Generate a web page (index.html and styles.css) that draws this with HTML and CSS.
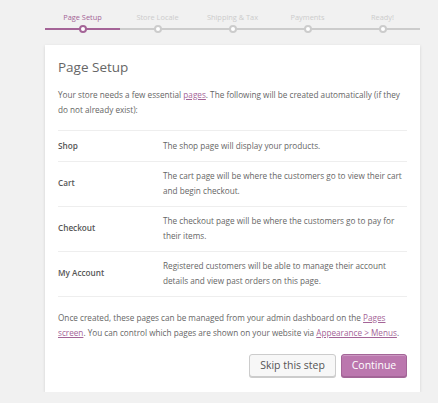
FILE: index.html
```html
<!DOCTYPE html>
<html>
<head>
<meta charset="utf-8">
<link rel="stylesheet" href="styles.css">
</head>
<body>
<div class="wrap">
  <ol class="steps">
    <li class="step active">Page Setup</li>
    <li class="step">Store Locale</li>
    <li class="step">Shipping &amp; Tax</li>
    <li class="step">Payments</li>
    <li class="step">Ready!</li>
  </ol>
  <div class="card">
    <h1 class="title">Page Setup</h1>
    <p class="intro">Your store needs a few essential <a href="#">pages</a>. The following will be created automatically (if they do not already exist):</p>
    <table class="pages">
      <tr><th>Shop</th><td>The shop page will display your products.</td></tr>
      <tr><th>Cart</th><td>The cart page will be where the customers go to view their cart and begin checkout.</td></tr>
      <tr><th>Checkout</th><td>The checkout page will be where the customers go to pay for their items.</td></tr>
      <tr><th>My Account</th><td>Registered customers will be able to manage their account details and view past orders on this page.</td></tr>
    </table>
    <p class="outro">Once created, these pages can be managed from your admin dashboard on the <a href="#">Pages screen</a>. You can control which pages are shown on your website via <a href="#">Appearance &gt; Menus</a>.</p>
    <div class="actions">
      <button class="btn btn-skip">Skip this step</button>
      <button class="btn btn-primary">Continue</button>
    </div>
  </div>
</div>
</body>
</html>
```
FILE: styles.css
```css
html, body {
  margin: 0;
  padding: 0;
  background: #f1f1f1;
}
body {
  font-family: "Open Sans", "DejaVu Sans", sans-serif;
  color: #666;
}
.wrap {
  margin-left: 45px;
  width: 375px;
  padding-top: 11px;
}
.steps {
  list-style: none;
  margin: 0;
  padding: 0;
  display: flex;
}
.step {
  position: relative;
  width: 75px;
  text-align: center;
  font-size: 7.4px;
  line-height: 12px;
  color: #ccc;
  padding-bottom: 5px;
  border-bottom: 2px solid #ccc;
}
.step::after {
  content: "";
  position: absolute;
  left: 50%;
  bottom: -5px;
  width: 8px;
  height: 8px;
  margin-left: -4px;
  box-sizing: border-box;
  border: 2px solid #ccc;
  border-radius: 50%;
  background: #fff;
}
.step.active {
  color: #a46497;
  border-bottom-color: #a46497;
}
.step.active::after {
  border-color: #a46497;
}
.card {
  margin-top: 15px;
  background: #fff;
  box-shadow: 0 1px 3px rgba(0, 0, 0, 0.13);
  padding: 12px 13px 15px;
}
.title {
  margin: 0 0 10px;
  font-size: 13.5px;
  line-height: 20px;
  font-weight: normal;
  color: #666;
}
.intro, .outro {
  margin: 0;
  font-size: 8.2px;
  line-height: 15px;
}
a {
  color: #a46497;
}
.pages {
  margin: 13px 0 13px;
  width: 100%;
  border-collapse: collapse;
  border-top: 1px solid #eee;
  font-size: 8.2px;
  line-height: 14.5px;
}
.pages th, .pages td {
  padding: 7.5px 0;
  border-bottom: 1px solid #eee;
  text-align: left;
  vertical-align: middle;
}
.pages th {
  width: 105px;
  font-weight: 600;
  color: #555;
}
.actions {
  margin-top: 14px;
  display: flex;
  justify-content: flex-end;
  gap: 5px;
}
.btn {
  font-family: inherit;
  font-size: 10.5px;
  height: 23px;
  padding: 0 8px;
  border-radius: 3px;
  border: 1px solid #ccc;
  cursor: pointer;
  white-space: nowrap;
}
.btn-skip {
  background: #f7f7f7;
  color: #555;
  box-shadow: 0 1px 0 #ccc;
  min-width: 87px;
}
.btn-primary {
  background: #bb77ae;
  border-color: #a36597;
  color: #fff;
  box-shadow: inset 0 1px 0 rgba(255,255,255,.25), 0 1px 0 #a36597;
  min-width: 66px;
}
```
